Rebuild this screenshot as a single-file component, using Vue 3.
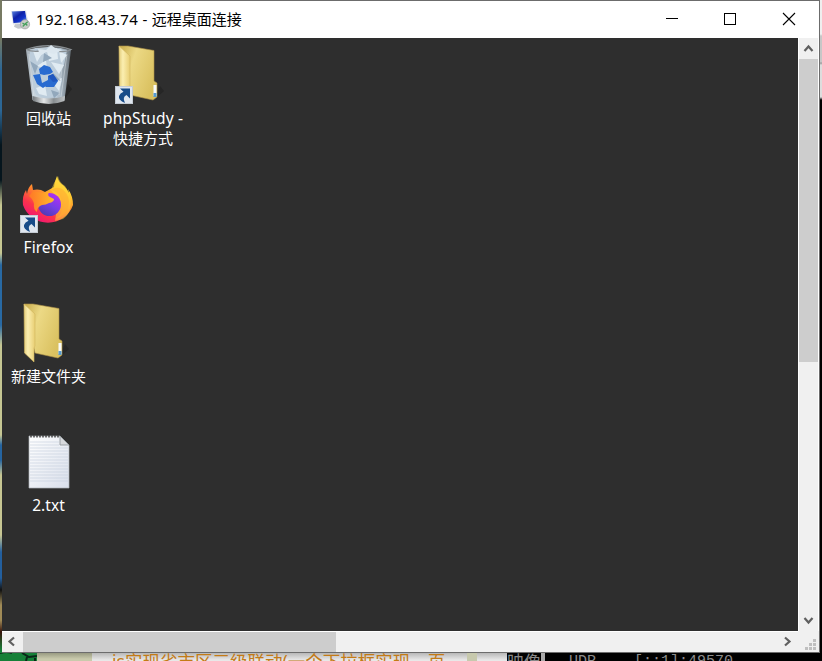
<script setup>
const items = [
  { id: 'bin', kind: 'bin', lines: ['回收站'], col: 1, row: 1 },
  { id: 'php', kind: 'folder', link: true, lines: ['phpStudy -', '快捷方式'], col: 2, row: 1, latin: 'php' },
  { id: 'firefox', kind: 'firefox', link: true, lines: ['Firefox'], col: 1, row: 2, latin: 'ff' },
  { id: 'folder', kind: 'folder', lines: ['新建文件夹'], col: 1, row: 3 },
  { id: 'txt', kind: 'text', lines: ['2.txt'], col: 1, row: 4, latin: 'tx' },
]
const teeth = Array.from({ length: 10 }, (_, i) => 14 + i * 3)
const rules = Array.from({ length: 14 }, (_, i) => 13 + i * 3)
</script>

<template>
  <div class="screen">
    <div class="edge-left"></div>
    <section class="window">
      <header class="titlebar">
        <svg class="app-icon" width="20" height="20" viewBox="0 0 20 20">
          <defs>
            <linearGradient id="mon" x1="0" y1="0" x2="1" y2="1">
              <stop offset="0" stop-color="#5a83e0" /><stop offset=".4" stop-color="#0d20a8" /><stop offset=".65" stop-color="#1233c8" /><stop offset="1" stop-color="#84b4f4" />
            </linearGradient>
          </defs>
          <path d="M4 14h9l2 4-8 .7-4-2z" fill="#c5c8cc" />
          <path d="M0 1l15-.6L17.500 13 2 14.500z" fill="#dfe3ea" />
          <path d="M1 1.500l13-.5 2 11-13.500 1z" fill="url(#mon)" />
          <circle cx="14" cy="14.300" r="4.600" fill="#c8cbc8" stroke="#999d9b" stroke-width=".7" />
          <path d="M11.500 13l2.200 1.500-2 2M16.800 11.800l-2.300 1.700 1.800 2" stroke="#45a05a" stroke-width="1.300" fill="none" />
        </svg>
        <span class="title"><span class="addr">192.168.43.74 - </span>远程桌面连接</span>
        <div class="controls">
          <svg width="58" height="37" shape-rendering="crispEdges"><path d="M7 17.500h12" stroke="#000" /></svg>
          <svg width="58" height="37" shape-rendering="crispEdges"><rect x="7.500" y="12.500" width="11" height="11" fill="none" stroke="#000" /></svg>
          <svg width="44" height="37"><path d="M8 12l12 12M20 12l-12 12" stroke="#000" stroke-width="1.100" /></svg>
        </div>
      </header>
      <div class="client">
        <main class="desktop">
          <div v-for="it in items" :key="it.id" class="item" :style="{ gridColumn: it.col, gridRow: it.row }">
            <svg class="pic" width="64" height="64" viewBox="0 0 64 64">
              <g v-if="it.kind === 'bin'">
                <defs>
                  <linearGradient id="glass"><stop offset="0" stop-color="#a2abb3" /><stop offset=".2" stop-color="#c9d6df" /><stop offset=".75" stop-color="#aebdca" /><stop offset="1" stop-color="#626b72" /></linearGradient>
                  <linearGradient id="foot"><stop offset="0" stop-color="#70767a" /><stop offset=".35" stop-color="#e5e7e8" /><stop offset=".65" stop-color="#898e91" /><stop offset="1" stop-color="#bfc3c5" /></linearGradient>
                </defs>
                <path d="M47 58l8-11-4-5-5 20z" fill="#242424" />
                <path d="M9 8l6.500 50Q32 64 47.500 58L54 8Q31 2 9 8z" fill="url(#glass)" />
                <path d="M13 9l7-3 4 4 8-6 7 3 11 1-3 15-5 10 3 6-5 16-12 1-9-3-5-13 2-8-3-13z" fill="#bccddb" />
                <path d="M16 9l10 1-6 10zM30 9l10-3 1 11-9 2zM20 24l9-6 1 9zM34 20l13 3-5 9zM19 46l9-3 2 11-8-2zM35 40l10-4-3 13zM42 9l8 4-6 8z" fill="#e0ebf2" />
                <path d="M13 19l8 5-3 8zM27 11l8 5-9 4zM36 31l8 8-10-3zM34 48l9 3-6 5z" fill="#92a8bc" />
                <path d="M12 12l5 44M50 12l-6 43M46 15l-4 38" stroke="#e1e9ee" stroke-width=".8" opacity=".6" />
                <path d="M22 27l5-4 6 2 3 5-3 2-6 1-4-1zM16 33l7-1 2 9 4 3-3 2-6-4zM31 34l5-2 5 7-4 6h-8l-4-4 6-3z" fill="#286bd0" />
                <path d="M31 34l5-2 5 7-5 1z" fill="#1f57bf" />
                <path d="M15.500 54Q32 59 48 54l-.5 5Q32 65 16 59z" fill="url(#foot)" />
                <path d="M9 7.500Q31 0 54 7.500Q50 10 42 9.500M9 7.500Q15 10 23 9" fill="none" stroke="#888e92" stroke-width="1.300" />
                <path d="M21 7l8 1 5-5 4 3 7 2-8 4-8-2-6 4z" fill="#dce7ef" />
              </g>
              <g v-else-if="it.kind === 'folder'">
                <defs>
                  <linearGradient id="back" x2="1" y2=".5"><stop offset="0" stop-color="#c7aa49" /><stop offset=".4" stop-color="#ecd985" /><stop offset="1" stop-color="#dac160" /></linearGradient>
                  <linearGradient id="flap" x2="1"><stop offset="0" stop-color="#e3cd7c" /><stop offset=".35" stop-color="#fbeeb0" /><stop offset="1" stop-color="#e8ce73" /></linearGradient>
                </defs>
                <path d="M43 57l9-8-4-5-5 12z" fill="#262626" />
                <path d="M7 4h9l26 4.500V39l3 2V55l-4 3L18 53z" fill="url(#back)" stroke="#ac9147" stroke-width=".6" />
                <path d="M7 4l11 10v32l-1 2v14L7.500 53z" fill="url(#flap)" stroke="#d2b65e" stroke-width=".6" />
                <path d="M41.500 43h3v11h-3z" fill="#f8fafa" /><path d="M41.500 51h3v4h-3z" fill="#579bd0" />
              </g>
              <g v-else-if="it.kind === 'firefox'" transform="translate(0 1)">
                <defs>
                  <linearGradient id="fire" x1=".85" y1="0" x2=".2" y2="1"><stop offset="0" stop-color="#fff34d" /><stop offset=".28" stop-color="#ffc42e" /><stop offset=".5" stop-color="#ff812e" /><stop offset=".73" stop-color="#fb344b" /><stop offset="1" stop-color="#ef0d7e" /></linearGradient>
                  <linearGradient id="globe" x1=".8" y1="0" x2=".2" y2="1"><stop offset="0" stop-color="#b52df5" /><stop offset=".5" stop-color="#763ee5" /><stop offset="1" stop-color="#493aad" /></linearGradient>
                  <linearGradient id="fox" x2="1"><stop offset="0" stop-color="#ff7727" /><stop offset="1" stop-color="#ffba29" /></linearGradient>
                </defs>
                <path d="M15 12l1 6q4-1 8 0l4 2 9-5q0-3 3-11 1 6 7 10 3 3 5 7l-1-4q5 7 5 16A26.500 26.500 0 0 1 6 33q-1-9 3-15l1 4q1-7 5-10z" fill="url(#fire)" />
                <path d="M34 18q3-8 7-14 1 6 7 10 4 5 5 11 3 15-7 22l-8 2 3-20z" fill="#ffd43b" opacity=".52" />
                <circle cx="32.500" cy="32.500" r="11.500" fill="url(#globe)" />
                <path d="M34 18q8 2 10 9 4 15-6 20 13-3 14-18-1-8-7-12-5-3-11 1z" fill="#ffad32" opacity=".6" />
                <path d="M12 24l4-5 10 2q3-2 6-1-2 4 1 5l4 2q0 3-5 4-3 2-7 2l-2 1q-3 2-3 6-4-3-3-8-1-5-5-8z" fill="url(#fox)" />
              </g>
              <g v-else>
                <defs><linearGradient id="paper" x2="1" y2="1"><stop offset="0" stop-color="#fff" /><stop offset="1" stop-color="#d9dfeb" /></linearGradient></defs>
                <path d="M12 7h31l9 9v43H12z" fill="url(#paper)" stroke="#adb2b8" stroke-width=".7" />
                <path v-for="y in rules" :key="y" :d="`M13 ${y}h${y < 18 ? 29 : 38}`" stroke="#c4cedb" stroke-width=".6" />
                <path v-for="x in teeth" :key="x" :d="`M${x} 6v2.500`" stroke="#454545" stroke-width="1.500" />
                <path d="M43 7v9h9z" fill="#d7d9dc" stroke="#92989d" stroke-width=".9" />
              </g>
              <g v-if="it.link">
                <rect x="3.500" y="44.500" width="17" height="17" fill="#dfe6ef" stroke="#c4cbd3" stroke-width="1" />
                <path d="M8 46.500h10v10l-3.500-3.500Q10 55 13 61 6 58 7 54 8 51 11.500 49.800z" fill="#174b88" />
              </g>
            </svg>
            <div class="label"><div v-for="(line, n) in it.lines" :key="line" :class="n === 0 ? it.latin : ''">{{ line }}</div></div>
          </div>
        </main>
        <div class="vbar">
          <svg width="19" height="21"><path d="M5.500 13l4-4.500 4 4.500" /></svg>
          <div class="vthumb"></div>
          <svg class="end" width="19" height="20"><path d="M5.500 7l4 4.500 4-4.500" /></svg>
        </div>
        <div class="hbar">
          <svg width="21" height="20"><path d="M12 5.500L7.500 9.500 12 13.500" /></svg>
          <div class="hthumb"></div>
          <svg class="end" width="21" height="20"><path d="M8 5.500l4.500 4-4.500 4" /></svg>
        </div>
        <svg class="grip" width="21" height="21" shape-rendering="crispEdges" fill="#bfbfbf">
          <path d="M15 8h3v3h-3zM11 12h3v3h-3zM15 12h3v3h-3zM7 16h3v3H7zM11 16h3v3h-3zM15 16h3v3h-3z" />
        </svg>
      </div>
    </section>
    <div class="edge-right"></div>
    <footer class="behind">
      <svg class="green" width="37" height="8"><rect width="37" height="8" fill="#168038" /><path d="M0 0q7-2 12 0M22 0l7 4 8-1M27 4l-1 4M35 5v3" fill="none" stroke="#092718" stroke-width="2" /></svg>
      <span class="olive"></span>
      <span class="article">js实现省市区三级联动(一个下拉框实现，页</span>
      <span class="divider"></span><span class="pale"></span>
      <span class="dark">映像</span><span class="split"></span>
      <span class="console">UDP<span class="sock">[::1]:49570</span></span>
    </footer>
  </div>
</template>

<style>
body { overflow: hidden; background: #000; }
</style>
<style scoped>
.screen { width: 822px; height: 661px; display: grid; grid-template: 653px 8px / 2px 818px 2px; overflow: hidden; font: 15px/20px "Noto Sans", "Noto Sans CJK SC", sans-serif; }
svg { display: block; flex: none; }
.edge-left { background: linear-gradient(#777a63 0 38px, #2c6796 70px 110px, #05151d 145px 180px, #c7c893 205px 253px, #2869a3 265px 325px, #c5c693 345px 435px, #2564a0 445px 460px, #c7c693 475px 535px, #235f9e 552px 578px, #111 590px, #a08b57 605px 620px, #37140c 632px, #168038 650px); }
.edge-right { background: linear-gradient(#efefef 0 34px, #c7c7c7 36px 62px, #999 63px, #ddd 65px 97px, #000 100px); }
.window { box-sizing: border-box; border: solid #6c6c6c; border-width: 1px 1px 1px 0; background: #fff; }
.titlebar { height: 37px; box-sizing: border-box; padding-left: 9px; display: flex; align-items: center; color: #000; }
.app-icon { margin-top: 1px; }
.title { margin: -2px 0 0 5px; white-space: pre; }
.addr { letter-spacing: .33px; }
.controls { display: flex; margin-left: auto; }
.client { display: grid; grid-template: 593px 21px / 796px 21px; }
.desktop { background: #2e2e2e; color: #fff; padding: 2px 0 0; display: grid; grid-template-columns: 94px 95px; grid-template-rows: repeat(4, 129px); align-content: start; }
.item { display: flex; flex-direction: column; align-items: center; }
.pic { margin-top: 2px; }
.label { text-align: center; white-space: nowrap; margin: 2px 1px 0 0; }
.php { font-size: 15.5px; letter-spacing: .12px; }
.ff { font-size: 15.5px; letter-spacing: .05px; }
.tx { font-size: 15.5px; letter-spacing: .05px; }
.vbar { background: #f0f0f0; border-left: 1px solid #fff; border-right: 1px solid #fff; display: flex; flex-direction: column; }
.vthumb { height: 303px; background: #cdcdcd; }
.hbar { background: #f0f0f0; border-top: 1px solid #fff; display: flex; }
.hthumb { width: 313px; background: #cdcdcd; }
.vbar path, .hbar path { fill: none; stroke: #606060; stroke-width: 2.2; }
.vbar .end { margin-top: auto; }
.hbar .end { margin-left: auto; }
.grip { background: #f0f0f0; }
.behind { grid-column: 1 / -1; height: 8px; display: flex; overflow: hidden; background: #000; white-space: pre; }
.behind > * { flex: none; height: 8px; overflow: hidden; box-sizing: border-box; }
.olive { width: 55px; background: linear-gradient(#999b82, #c9caac 6px); }
.article { width: 375px; padding-left: 20px; background: linear-gradient(#b8b8b8, #e8e8e8 7px); color: #c47b16; font-size: 17.5px; line-height: 16px; }
.divider { width: 10px; background: #c7c9ad; }
.pale { width: 30px; background: linear-gradient(#b8b8b8, #e8e8e8 7px); }
.dark { width: 34px; background: #000; color: #888; font-size: 17px; line-height: 18px; }
.split { width: 4px; background: #aaa; }
.console { padding-left: 24px; color: #8c8c8c; font: 15px/18px "Liberation Mono", monospace; }
.sock { margin-left: 38px; }
</style>
